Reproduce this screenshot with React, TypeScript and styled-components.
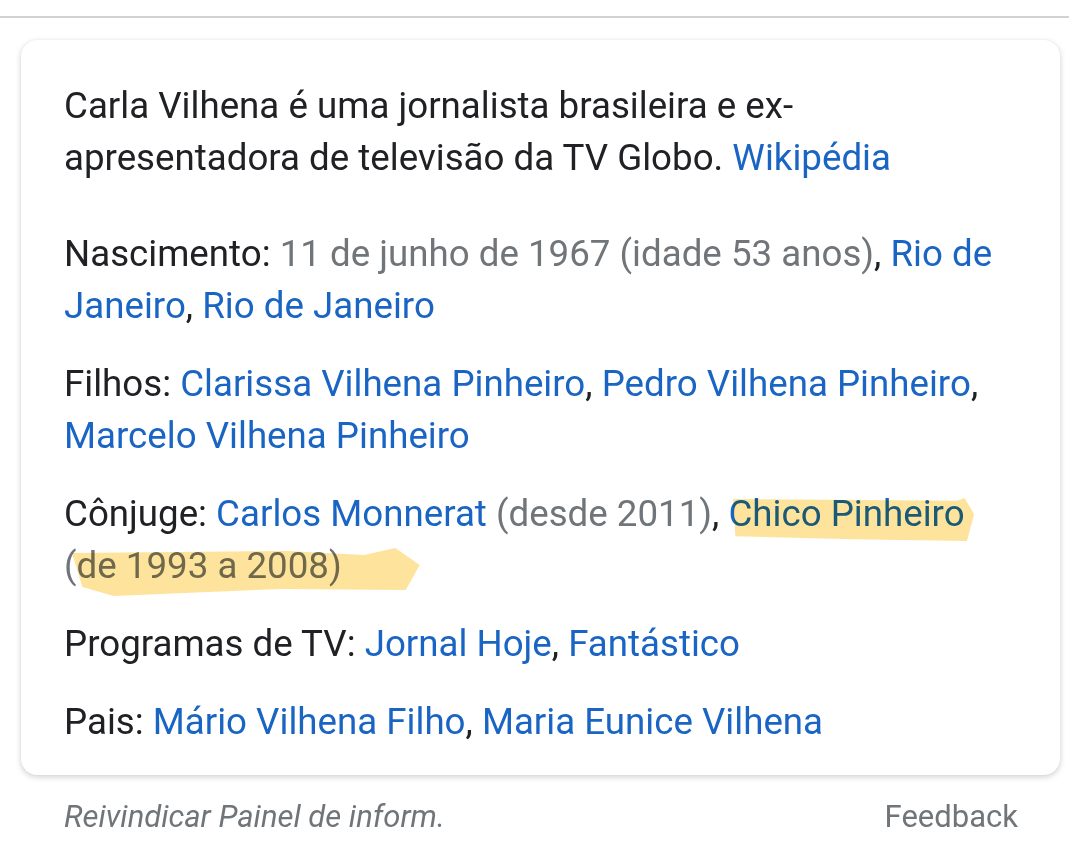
import styled, { createGlobalStyle } from 'styled-components'

const Global = createGlobalStyle`
	body {
		margin: 0;
		background: #ffffff;
		font-family: Roboto, "Noto Sans", sans-serif;
	}
`

const TopRule = styled.div`
	height: 16px;
	border-bottom: 2px solid #d2d2d2;
`

const Card = styled.section`
	margin: 22px 9px 0 21px;
	padding: 40px 55px 27px 43px;
	background: #fff;
	border-radius: 16px;
	box-shadow: 0 2px 6px rgba(0, 0, 0, 0.18), 0 0 2px rgba(0, 0, 0, 0.06);
`

const Desc = styled.p`
	margin: 0 0 44px;
	font-size: 36.7px;
	line-height: 52px;
	color: #202124;
`

const Row = styled.p`
	margin: 0 0 26px;
	font-size: 36.7px;
	line-height: 52px;
	color: #202124;
	&:last-child { margin-bottom: 0; }
`

const Link = styled.a`
	color: #1a65c4;
	text-decoration: none;
`

const Muted = styled.span`
	color: #70757a;
`

const Marked = styled.span`
	position: relative;
	white-space: nowrap;
`

const Marker = styled.svg<{ $left: number; $right: number; $top: number; $h: number }>`
	position: absolute;
	left: ${p => p.$left}px;
	top: ${p => p.$top}px;
	height: ${p => p.$h}px;
	width: calc(100% - ${p => p.$left + p.$right}px);
	mix-blend-mode: multiply;
	pointer-events: none;
`

const Footer = styled.div`
	display: flex;
	justify-content: space-between;
	padding: 23px 51px 0 64px;
	font-size: 31px;
	color: #70757a;
`

const Claim = styled.span`
	font-style: italic;
`

function App() {
	return (
		<>
			<Global />
			<TopRule />
			<Card>
				<Desc>
					Carla Vilhena é uma jornalista brasileira e ex-apresentadora de televisão da TV Globo. <Link>Wikipédia</Link>
				</Desc>
				<Row>
					Nascimento: <Muted>11 de junho de 1967 (idade 53 anos)</Muted>, <Link>Rio de Janeiro</Link>, <Link>Rio de Janeiro</Link>
				</Row>
				<Row>
					Filhos: <Link>Clarissa Vilhena Pinheiro</Link>, <Link>Pedro Vilhena Pinheiro</Link>, <Link>Marcelo Vilhena Pinheiro</Link>
				</Row>
				<Row>
					Cônjuge: <Link>Carlos Monnerat</Link> <Muted>(desde 2011)</Muted>,{' '}
					<Marked>
						<Link>Chico Pinheiro</Link>
						<Marker $left={5} $right={-10} $top={4} $h={48} viewBox="0 0 100 100" preserveAspectRatio="none">
							<path d="M0 6 L93 10 L96 4 L100 38 L97 94 L50 90 L1 84 Z" fill="#fcd97a" opacity="0.75" />
						</Marker>
					</Marked>{' '}
					<Marked>
						<Muted>(de 1993 a 2008)</Muted>
						<Marker $left={8} $right={-78} $top={3} $h={50} viewBox="0 0 100 100" preserveAspectRatio="none">
							<path d="M0 12 L62 8 L84 16 L93 2 L100 36 L96 86 L60 84 L12 98 L3 80 Z" fill="#fcd97a" opacity="0.75" />
						</Marker>
					</Marked>
				</Row>
				<Row>
					Programas de TV: <Link>Jornal Hoje</Link>, <Link>Fantástico</Link>
				</Row>
				<Row>
					Pais: <Link>Mário Vilhena Filho</Link>, <Link>Maria Eunice Vilhena</Link>
				</Row>
			</Card>
			<Footer>
				<Claim>Reivindicar Painel de inform.</Claim>
				<span>Feedback</span>
			</Footer>
		</>
	)
}

export default App
